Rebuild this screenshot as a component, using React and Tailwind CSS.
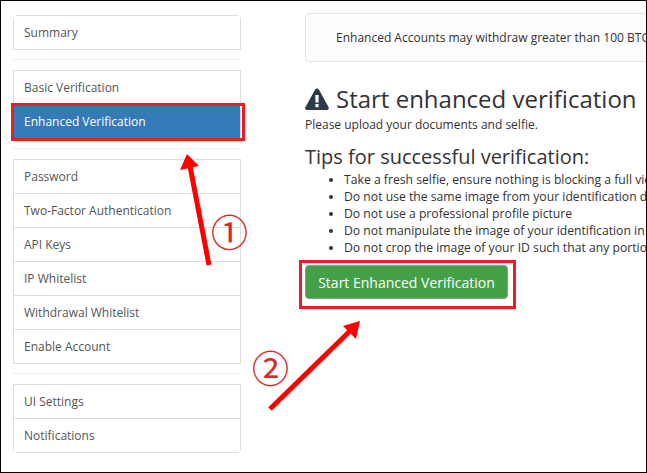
const font = { fontFamily: '"Open Sans", sans-serif' };

const groups = [
  [{ label: 'Summary' }],
  [{ label: 'Basic Verification' }, { label: 'Enhanced Verification', active: true }],
  [
    { label: 'Password' },
    { label: 'Two-Factor Authentication' },
    { label: 'API Keys' },
    { label: 'IP Whitelist' },
    { label: 'Withdrawal Whitelist' },
    { label: 'Enable Account' },
  ],
  [{ label: 'UI Settings' }, { label: 'Notifications' }],
];

const tips = [
  'Take a fresh selfie, ensure nothing is blocking a full view of your face',
  'Do not use the same image from your identification document as your selfie',
  'Do not use a professional profile picture',
  'Do not manipulate the image of your identification in any way',
  'Do not crop the image of your ID such that any portion is missing',
];

function NavGroup({ items, first, last }) {
  return (
    <div className={`border border-[#ddd] ${first ? 'rounded-t' : ''} ${last ? 'rounded-b' : ''}`}>
      {items.map((item, i) => (
        <div
          key={item.label}
          className={`h-[33px] pl-[10px] flex items-center text-[12px] ${i > 0 ? 'border-t border-[#ddd] h-[34px]' : ''} ${item.active ? 'bg-[#337ab7] text-white' : 'bg-white text-[#555]'}`}
        >
          {item.label}
        </div>
      ))}
    </div>
  );
}

function Annotations() {
  return (
    <>
      <div className="absolute left-[10px] top-[102px] w-[234px] h-[38px] border-[3px] border-[#ed1c24]" />
      <div className="absolute left-[298px] top-[259px] w-[217px] h-[49px] border-[3px] border-[#ed1c24]" />
      <svg className="absolute left-0 top-0" width="647" height="473" viewBox="0 0 647 473" fill="none">
        <line x1="208" y1="264" x2="189" y2="165" stroke="#ff0000" strokeWidth="5" />
        <polygon points="186,153 179,169 198,165" fill="#ff0000" />
        <line x1="269" y1="408" x2="350" y2="329" stroke="#ff0000" strokeWidth="5" />
        <polygon points="359,320 342,325 355,338" fill="#ff0000" />
      </svg>
      <span
        className="absolute left-[210px] top-[209px] text-[37px] leading-[42px] text-[#d42a2a] [-webkit-text-stroke:0.2px_#d42a2a]"
        style={{ fontFamily: '"Noto Sans CJK JP", serif' }}
      >
        ①
      </span>
      <span
        className="absolute left-[251px] top-[345px] text-[37px] leading-[42px] text-[#d42a2a] [-webkit-text-stroke:0.2px_#d42a2a]"
        style={{ fontFamily: '"Noto Sans CJK JP", serif' }}
      >
        ②
      </span>
    </>
  );
}

export default function App() {
  return (
    <div className="relative w-[647px] h-[473px] overflow-hidden border border-black bg-white flex text-[#333]" style={font}>
      <aside className="w-[228px] ml-[12px] mt-[14px] shrink-0">
        {groups.map((items, i) => (
          <div key={i}>
            {i > 0 && <hr className="border-t border-[#eee] mt-[9px] mb-[10px]" />}
            <NavGroup items={items} first={i === 0} last={i === groups.length - 1} />
          </div>
        ))}
      </aside>

      <main className="ml-[64px] mt-[12px] w-[500px] shrink-0">
        <div className="h-[49px] rounded border border-[#e3e3e3] bg-[#fdfdfd] pl-[30px] flex items-center text-[12px] whitespace-nowrap">
          Enhanced Accounts may withdraw greater than 100 BTC per day after completing verification
        </div>

        <h1 className="mt-[22px] text-[24px] leading-[30px] flex items-center gap-[7px] whitespace-nowrap">
          <svg width="24" height="22" viewBox="0 0 24 22">
            <path d="M12 0.5c.9 0 1.5.5 2 1.3l9.5 17.3c.7 1.4-.1 2.9-1.7 2.9H2.2C.6 22-.2 20.5.5 19.1L10 1.8C10.5 1 11.1.5 12 .5z" fill="#2d3a4a" />
            <rect x="10.4" y="7" width="3.2" height="7.5" fill="#fff" />
            <rect x="10.4" y="16" width="3.2" height="3.2" fill="#fff" />
          </svg>
          Start enhanced verification
        </h1>
        <p className="mt-[3px] text-[12px] leading-[16px]">Please upload your documents and selfie.</p>

        <h2 className="mt-[12px] text-[20px] leading-[24px] whitespace-nowrap">Tips for successful verification:</h2>
        <ul className="mt-[2px] list-disc pl-[39px] text-[12.2px] leading-[17px] whitespace-nowrap">
          {tips.map((tip) => (
            <li key={tip}>{tip}</li>
          ))}
        </ul>

        <button className="mt-[9px] h-[34px] w-[203px] rounded bg-[#43a047] border border-[#8f9f8f] text-white text-[14px] flex items-center justify-center">
          Start Enhanced Verification
        </button>
      </main>

      <Annotations />
    </div>
  );
}
